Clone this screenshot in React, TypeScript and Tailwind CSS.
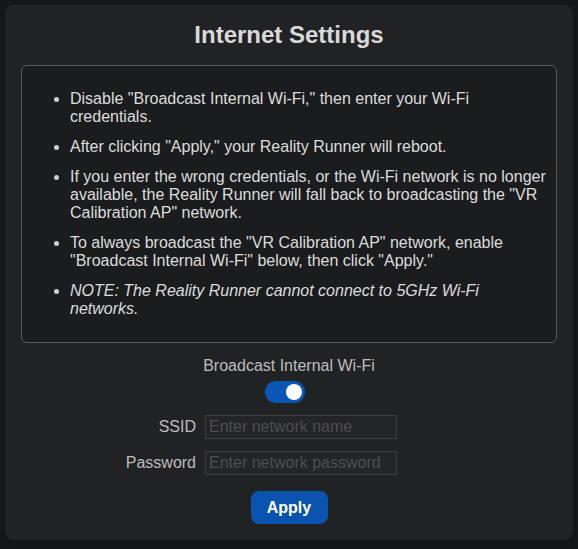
import { useState } from "react";

const notes = [
  'Disable "Broadcast Internal Wi-Fi," then enter your Wi-Fi credentials.',
  'After clicking "Apply," your Reality Runner will reboot.',
  'If you enter the wrong credentials, or the Wi-Fi network is no longer available, the Reality Runner will fall back to broadcasting the "VR Calibration AP" network.',
  'To always broadcast the "VR Calibration AP" network, enable "Broadcast Internal Wi-Fi" below, then click "Apply."',
];

const App = () => {
  const [broadcast, setBroadcast] = useState(true);
  const [ssid, setSsid] = useState("");
  const [password, setPassword] = useState("");

  return (
    <div className="min-h-screen bg-[#161719] p-[5px] font-['Liberation_Sans',Arial,sans-serif]">
      <div className="w-[568px] rounded-lg bg-[#212224] p-4 shadow-lg">
        <h2 className="mb-4 text-center text-2xl leading-[28px] font-bold text-[#d9d9d9]">Internet Settings</h2>

        <div className="rounded-md border border-[#5a5b5d] bg-[#1b1c1e] p-2">
          <ul className="my-4 list-disc pl-10 text-base leading-[18px] text-[#dcdcdc] marker:text-[#cfcfcf]">
            {notes.map((note, i) => (
              <li key={i} className="mb-3">{note}</li>
            ))}
            <li className="italic">NOTE: The Reality Runner cannot connect to 5GHz Wi-Fi networks.</li>
          </ul>
        </div>

        <div className="mt-[14px] flex flex-col items-center">
          <span className="text-base leading-[18px] text-[#bdbdbd]">Broadcast Internal Wi-Fi</span>
          <button
            onClick={() => setBroadcast((b) => !b)}
            className={`mt-1.5 mr-2 flex h-[22px] w-10 items-center rounded-full px-[3px] ${broadcast ? "justify-end bg-[#0a56b5]" : "justify-start bg-[#555]"}`}
          >
            <span className="h-4 w-4 rounded-full bg-white" />
          </button>
        </div>

        <div className="mt-3 flex flex-col gap-3">
          <div className="flex items-center gap-[9px]">
            <label className="w-[175px] text-right text-base text-[#bdbdbd]">SSID</label>
            <input
              value={ssid}
              onChange={(e) => setSsid(e.target.value)}
              placeholder="Enter network name"
              className="h-6 w-[192px] border border-[#3d3e40] bg-[#242527] px-[3px] text-base text-[#ddd] outline-none placeholder:text-[#4d4e50]"
            />
          </div>
          <div className="flex items-center gap-[9px]">
            <label className="w-[175px] text-right text-base text-[#bdbdbd]">Password</label>
            <input
              type="password"
              value={password}
              onChange={(e) => setPassword(e.target.value)}
              placeholder="Enter network password"
              className="h-6 w-[192px] border border-[#3d3e40] bg-[#242527] px-[3px] text-base text-[#ddd] outline-none placeholder:text-[#4d4e50]"
            />
          </div>
        </div>

        <div className="mt-4 flex justify-center">
          <button className="h-[33px] w-[77px] rounded-lg bg-[#0a53ae] text-base font-bold text-white">Apply</button>
        </div>
      </div>
    </div>
  );
};

export default App;
